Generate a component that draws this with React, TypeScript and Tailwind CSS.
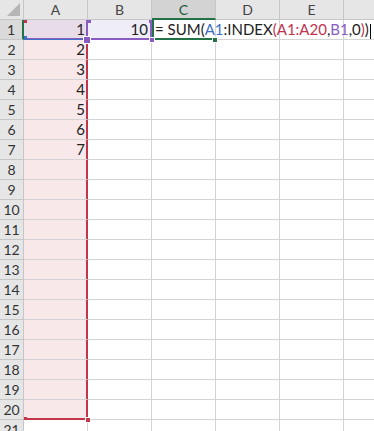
const COLS = ["A", "B", "C", "D", "E", "F"];
const ROWS = Array.from({ length: 21 }, (_, i) => i + 1);

function Formula() {
	return (
		<span className="whitespace-nowrap">
			<span>= SUM(</span>
			<span className="text-[#3f6fc6]">A1</span>
			<span>:INDEX</span>
			<span className="text-[#c2334d]">(A1:A20</span>
			<span>,</span>
			<span className="text-[#8a5cc2]">B1</span>
			<span>,0</span>
			<span className="text-[#c2334d]">)</span>
			<span>)</span>
			<span className="inline-block w-px h-[15px] bg-black ml-[1px] align-middle"></span>
		</span>
	);
}

// range / selection outlines for a given cell
function cellEdges(c: string, r: number) {
	if (c === "A" && r === 1)
		return "bg-[#e7dce7] border-r-[#8a5cc2] border-b-[#3f6fc6] shadow-[inset_-1px_-1px_0_#8a5cc2,inset_0_-1px_0_#3f6fc6]";
	if (c === "A" && r === 20)
		return "bg-[#f9e8e9] border-r-[#c3354b] border-b-[#c3354b] shadow-[inset_-1px_-1px_0_#c3354b]";
	if (c === "A" && r < 20) return "bg-[#f9e8e9] border-r-[#c3354b] shadow-[inset_-1px_0_0_#c3354b]";
	if (c === "B" && r === 1)
		return "bg-[#efedf8] border-r-[#8a5cc2] border-b-[#8a5cc2] shadow-[inset_-1px_-1px_0_#8a5cc2]";
	if (c === "C" && r === 1)
		return "bg-white border-b-[#217346] shadow-[inset_2px_-1px_0_#217346]";
	return "bg-white";
}

function Handle({ className }: { className: string }) {
	return <span className={`absolute z-20 border border-white ${className}`}></span>;
}

export default function App() {
	return (
		<div
			className="w-[374px] h-[431px] overflow-hidden bg-white text-[#222]"
			style={{ fontFamily: "Lato, 'Liberation Sans', sans-serif" }}
		>
			{/* column headers */}
			<div className="flex h-[20px]">
				<div className="w-[24px] shrink-0 flex items-end justify-end p-[3px] bg-[#e6e6e6] border-r border-b border-[#c6c6c6]">
					<div className="w-0 h-0 border-l-[13px] border-l-transparent border-b-[13px] border-b-[#b5b5b5]"></div>
				</div>
				{COLS.map((c) => (
					<div
						key={c}
						className={
							c === "C"
								? "w-[64px] shrink-0 flex items-center justify-center text-[14px] bg-[#d3d3d3] border-r border-[#c6c6c6] border-b-2 border-b-[#217346] text-[#215a3a]"
								: "w-[64px] shrink-0 flex items-center justify-center text-[14px] bg-[#e6e6e6] border-r border-b border-[#c6c6c6] text-[#444]"
						}
					>
						{c === "F" ? "" : c}
					</div>
				))}
			</div>

			{ROWS.map((r) => (
				<div key={r} className="flex h-[20px]">
					<div
						className={
							r === 1
								? "w-[24px] shrink-0 flex items-center justify-center text-[14px] bg-[#dadada] border-b border-[#c6c6c6] border-r-2 border-r-[#217346] text-[#333]"
								: "w-[24px] shrink-0 flex items-center justify-center text-[14px] bg-[#e6e6e6] border-r border-b border-[#c6c6c6] text-[#333]"
						}
					>
						{r}
					</div>
					{COLS.map((c) => (
						<div
							key={c}
							className={`relative w-[64px] shrink-0 border-r border-b border-[#d4d4d4] text-[15px] leading-[19px] flex items-end ${cellEdges(c, r)}`}
						>
							{c === "A" && r <= 7 && <span className="ml-auto pr-[2px]">{r}</span>}
							{c === "B" && r === 1 && <span className="ml-auto pr-[3px]">10</span>}
							{c === "C" && r === 1 && (
								<div className="absolute left-[3px] bottom-0 z-10">
									<Formula />
								</div>
							)}

							{c === "A" && r === 1 && (
								<>
									<span className="absolute left-0 top-0 w-[3px] h-[3px] bg-[#c3354b]"></span>
									<span className="absolute left-0 -bottom-[2px] w-[3px] h-[5px] bg-[#3f6fc6]"></span>
								</>
							)}
							{c === "B" && r === 1 && (
								<>
									<span className="absolute -left-[2px] top-0 w-[5px] h-[3px] bg-[#8a5cc2]"></span>
									<span className="absolute -left-[2px] top-0 w-[2px] h-[20px] bg-[#8a5cc2]"></span>
									<span className="absolute -right-[3px] top-0 w-[5px] h-[3px] bg-[#8a5cc2]"></span>
									<Handle className="-left-[5px] -bottom-[5px] w-[8px] h-[8px] bg-[#8a5cc2]" />
									<Handle className="-right-[4px] -bottom-[4px] w-[6px] h-[6px] bg-[#8a5cc2]" />
								</>
							)}
							{c === "C" && r === 1 && (
								<Handle className="-right-[3px] -bottom-[4px] w-[6px] h-[6px] bg-[#217346]" />
							)}
							{c === "A" && r === 20 && (
								<>
									<span className="absolute left-0 -bottom-[3px] w-[3px] h-[5px] bg-[#c3354b]"></span>
									<Handle className="-right-[4px] -bottom-[4px] w-[6px] h-[6px] bg-[#c3354b]" />
								</>
							)}
						</div>
					))}
				</div>
			))}
		</div>
	);
}
